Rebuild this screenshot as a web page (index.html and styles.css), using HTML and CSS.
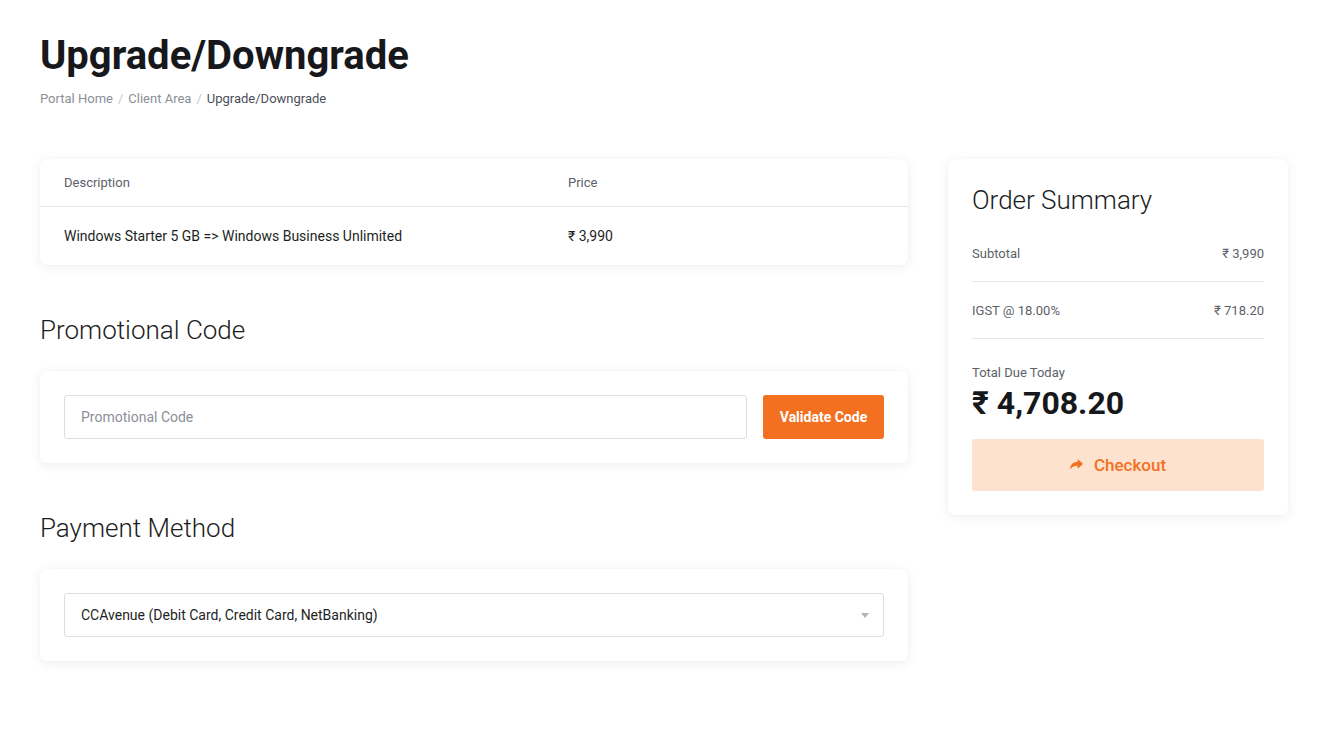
FILE: index.html
```html
<!DOCTYPE html>
<html lang="en">
<head>
<meta charset="utf-8">
<title>Upgrade/Downgrade</title>
<link rel="stylesheet" href="styles.css">
</head>
<body>
<div class="page">
  <header class="page-header">
    <h1 class="page-title">Upgrade/Downgrade</h1>
    <nav class="breadcrumb">
      <a class="crumb">Portal Home</a><span class="sep">/</span><a class="crumb">Client Area</a><span class="sep">/</span><span class="crumb current">Upgrade/Downgrade</span>
    </nav>
  </header>

  <div class="layout">
    <main class="main-col">
      <section class="card table-card">
        <div class="trow thead">
          <div class="cell desc">Description</div>
          <div class="cell price">Price</div>
        </div>
        <div class="trow tbody">
          <div class="cell desc">Windows Starter 5 GB =&gt; Windows Business Unlimited</div>
          <div class="cell price">₹ 3,990</div>
        </div>
      </section>

      <h2 class="section-title">Promotional Code</h2>
      <section class="card form-card">
        <div class="promo-row">
          <div class="input">Promotional Code</div>
          <button class="btn-validate">Validate Code</button>
        </div>
      </section>

      <h2 class="section-title">Payment Method</h2>
      <section class="card form-card">
        <div class="select">
          <span>CCAvenue (Debit Card, Credit Card, NetBanking)</span>
          <span class="caret"></span>
        </div>
      </section>
    </main>

    <aside class="side-col">
      <section class="card summary">
        <h3 class="summary-title">Order Summary</h3>
        <div class="sum-row first"><span>Subtotal</span><span>₹ 3,990</span></div>
        <div class="sum-row"><span>IGST @ 18.00%</span><span>₹ 718.20</span></div>
        <div class="total-label">Total Due Today</div>
        <div class="total-amount">₹ 4,708.20</div>
        <button class="btn-checkout">
          <svg class="share-icon" viewBox="0 0 16 14" width="13" height="12" aria-hidden="true"><path d="M15.6 5.3 10.2.3c-.4-.4-.9-.1-.9.4v2.6C4.3 3.4 1 5.6.2 11.3c-.1.5.5.8.8.4C2.7 9.1 5.2 8.1 9.3 8v2.7c0 .5.5.8.9.4l5.4-5c.3-.2.3-.6 0-.8z" fill="currentColor"/></svg>
          <span>Checkout</span>
        </button>
      </section>
    </aside>
  </div>
</div>
</body>
</html>
```

FILE: styles.css
```css
* { box-sizing: border-box; }
html, body { margin: 0; padding: 0; background: #ffffff; }
body {
  font-family: Roboto, "Noto Sans", "Liberation Sans", sans-serif;
  color: #1c1d21;
  -webkit-font-smoothing: antialiased;
}
.page { padding: 32px 46px 40px 40px; }
.page-header { margin-bottom: 51px; }
.page-title {
  margin: 0;
  font-size: 40px;
  font-weight: 700;
  line-height: 48px;
  color: #17181c;
}
.breadcrumb {
  margin-top: 10px;
  font-size: 13px;
  line-height: 18px;
  color: #8c8f98;
  display: flex;
  align-items: center;
}
.breadcrumb .sep { color: #c6c8cd; margin: 0 5px; }
.breadcrumb .current { color: #4c4f5a; }

.layout { display: flex; gap: 40px; align-items: flex-start; }
.main-col { width: 868px; flex: none; }
.side-col { width: 340px; flex: none; }

.card {
  background: #fff;
  border-radius: 6px;
  box-shadow: 0 2px 12px rgba(0,0,0,0.07), 0 0 1px rgba(0,0,0,0.06);
}

.trow { display: flex; padding: 0 24px; }
.thead { height: 48px; align-items: center; border-bottom: 1px solid #e6e7ea; font-size: 13px; color: #5c5f69; }
.tbody { height: 58px; align-items: center; font-size: 14px; color: #1e1f24; }
.cell.desc { width: 504px; }

.section-title {
  margin: 47px 0 24px;
  font-size: 26px;
  font-weight: 300;
  line-height: 34px;
  color: #1c1d21;
}
.main-col .card + .section-title { margin-top: 48px; }
.form-card { padding: 24px; }
.promo-row { display: flex; gap: 16px; }
.input {
  flex: 1;
  height: 44px;
  border: 1px solid #dcdde1;
  border-radius: 3px;
  padding: 0 16px;
  display: flex; align-items: center;
  font-size: 14px;
  color: #8c8f98;
}
.btn-validate {
  width: 121px;
  height: 44px;
  border: 0;
  border-radius: 3px;
  background: #f37021;
  color: #fff;
  font-family: inherit;
  font-size: 14px;
  font-weight: 700;
}
.select {
  height: 44px;
  border: 1px solid #dcdde1;
  border-radius: 3px;
  padding: 0 14px 0 16px;
  display: flex; align-items: center; justify-content: space-between;
  font-size: 14px;
  color: #1e1f24;
}
.caret {
  width: 0; height: 0;
  border-left: 4px solid transparent;
  border-right: 4px solid transparent;
  border-top: 5px solid #b0b3ba;
}

.summary { padding: 24px 24px 24px; }
.summary-title {
  margin: 0;
  font-size: 26px;
  font-weight: 300;
  line-height: 34px;
  color: #1c1d21;
}
.sum-row {
  display: flex; justify-content: space-between; align-items: center;
  height: 57px;
  border-bottom: 1px solid #e6e7ea;
  font-size: 13px;
  color: #5c5f69;
}
.sum-row.first { margin-top: 8px; }
.total-label { margin-top: 26px; font-size: 13px; line-height: 16px; color: #5c5f69; }
.total-amount { margin-top: 2px; font-size: 32px; font-weight: 700; line-height: 40px; color: #17181c; }
.btn-checkout {
  margin-top: 16px;
  width: 100%;
  height: 52px;
  border: 0;
  border-radius: 3px;
  background: #fde3cf;
  color: #f37021;
  font-family: inherit;
  font-size: 17px;
  font-weight: 500;
  display: flex; align-items: center; justify-content: center; gap: 11px;
}
.share-icon { display: block; }
```
